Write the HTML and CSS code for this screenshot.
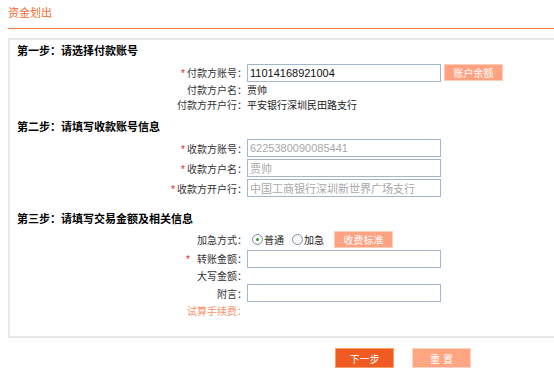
FILE: index.html
```html
<!DOCTYPE html>
<html lang="zh-CN">
<head>
    <meta charset="UTF-8">
    <title>资金划出</title>
    <link rel="stylesheet" href="styles.css">
</head>
<body>
    <div class="page-title">资金划出</div>

    <div class="panel">
        <div class="step">
            <h3 class="step-title">第一步：请选择付款账号</h3>
            <div class="form-row row-first">
                <label class="form-label"><span class="req">*</span>付款方账号：</label>
                <input class="text-input" type="text" value="11014168921004">
                <button class="btn-light btn-side">账户余额</button>
            </div>
            <div class="form-row is-text">
                <span class="form-label">付款方户名：</span>
                <span class="form-value">贾帅</span>
            </div>
            <div class="form-row is-text">
                <span class="form-label">付款方开户行：</span>
                <span class="form-value">平安银行深圳民田路支行</span>
            </div>
        </div>

        <div class="step step-2">
            <h3 class="step-title">第二步：请填写收款账号信息</h3>
            <div class="form-row row-first">
                <label class="form-label"><span class="req">*</span>收款方账号：</label>
                <input class="text-input is-readonly" type="text" value="6225380090085441" readonly>
            </div>
            <div class="form-row">
                <label class="form-label"><span class="req">*</span>收款方户名：</label>
                <input class="text-input is-readonly" type="text" value="贾帅" readonly>
            </div>
            <div class="form-row">
                <label class="form-label"><span class="req">*</span>收款方开户行：</label>
                <input class="text-input is-readonly" type="text" value="中国工商银行深圳新世界广场支行" readonly>
            </div>
        </div>

        <div class="step step-3">
            <h3 class="step-title">第三步：请填写交易金额及相关信息</h3>
            <div class="form-row row-first row-radio">
                <span class="form-label">加急方式：</span>
                <div class="radio-group">
                    <span class="radio is-checked"></span><span class="radio-text">普通</span>
                    <span class="radio"></span><span class="radio-text">加急</span>
                </div>
                <button class="btn-light btn-fee">收费标准</button>
            </div>
            <div class="form-row row-short">
                <label class="form-label"><span class="req req-wide">*</span>转账金额：</label>
                <input class="text-input" type="text">
            </div>
            <div class="form-row is-text">
                <span class="form-label">大写金额：</span>
            </div>
            <div class="form-row">
                <label class="form-label">附言：</label>
                <input class="text-input" type="text">
            </div>
            <div class="form-row is-text">
                <span class="form-label is-hint">试算手续费：</span>
            </div>
        </div>
    </div>

    <div class="actions">
        <button class="btn-primary">下一步</button>
        <button class="btn-light btn-reset">重 置</button>
    </div>
</body>
</html>
```

FILE: styles.css
```css
:root {
    --color-orange: #f26b2f;
    --color-line: #f47b3f;
    --color-panel-border: #e8e8e8;
    --color-input-border: #a3b6cb;
}

body {
    margin: 0;
    padding: 6px 0 0 8px;
    font-family: "Liberation Sans", "Noto Sans CJK SC", sans-serif;
    font-size: 10px;
    color: #333;
    background: #fff;
    overflow: hidden;
}

.page-title {
    color: var(--color-orange);
    font-size: 11px;
    line-height: 15px;
    padding-bottom: 7px;
    border-bottom: 1px solid var(--color-line);
}

.panel {
    margin-top: 9px;
    border: 2px solid var(--color-panel-border);
    border-right: 0;
    padding: 4px 0 18px;
}

.step-title {
    margin: 0;
    padding-left: 7px;
    font-size: 11px;
    font-weight: bold;
    line-height: 15px;
    color: #000;
}

.step-2 {
    margin-top: 8px;
}

.step-3 {
    margin-top: 14px;
}

.form-row {
    display: flex;
    align-items: center;
    height: 20px;
}

.form-row.is-text {
    height: 15px;
}

.step .row-first {
    margin-top: 3px;
}

.step:first-child .row-first {
    margin-top: 4px;
    height: 19px;
}

.row-radio,
.row-short {
    height: 19px;
}

.form-label {
    width: 237px;
    flex-shrink: 0;
    text-align: right;
    color: #333;
}

.form-label.is-hint {
    color: #f8916a;
}

.form-value {
    color: #222;
}

.req {
    color: #e3241c;
    margin-right: 2px;
}

.req-wide {
    margin-right: 7px;
}

.text-input {
    width: 194px;
    height: 18px;
    box-sizing: border-box;
    margin: 0;
    padding: 0 2px;
    border: 1px solid var(--color-input-border);
    font-family: "Liberation Sans", "Noto Sans CJK SC", sans-serif;
    font-size: 11px;
    color: #111;
    background: #fff;
    outline: none;
}

.text-input.is-readonly {
    color: #a8a8a8;
}

.btn-light,
.btn-primary {
    height: 17px;
    box-sizing: border-box;
    padding: 0;
    font-family: "Liberation Sans", "Noto Sans CJK SC", sans-serif;
    font-size: 10px;
    color: #fff;
    cursor: pointer;
}

.btn-light {
    width: 59px;
    background: #ffa282;
    border: 1px solid #ffcdb8;
}

.btn-side {
    margin-left: 3px;
}

.radio-group {
    display: flex;
    align-items: center;
    margin-left: 5px;
}

.radio {
    width: 11px;
    height: 11px;
    box-sizing: border-box;
    border-radius: 50%;
    border: 1px solid #7c8ea6;
    background: #fbfbfb;
    position: relative;
}

.radio.is-checked::after {
    content: "";
    position: absolute;
    left: 3px;
    top: 3px;
    width: 3px;
    height: 3px;
    border-radius: 50%;
    background: #2f9a2f;
}

.radio-text {
    margin: 0 8px 0 1px;
    color: #222;
}

.btn-fee {
    margin-left: 2px;
    height: 17px;
}

.actions {
    display: flex;
    gap: 18px;
    margin-top: 10px;
    padding-left: 327px;
}

.actions button {
    width: 59px;
    height: 20px;
    font-size: 10px;
}

.btn-primary {
    background: #f05a23;
    border: 1px solid #ff9d62;
}

.btn-reset {
    background: #ffa582;
    border: 1px solid #ffd2c1;
}
```
